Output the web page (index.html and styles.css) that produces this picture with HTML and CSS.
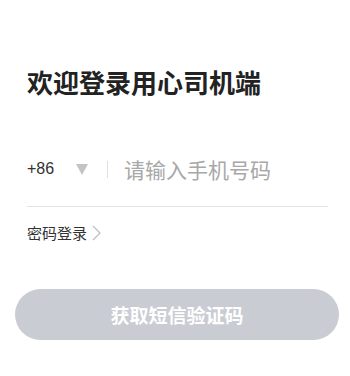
FILE: index.html
```html
<!DOCTYPE html>
<html lang="zh-CN">
<head>
    <meta charset="UTF-8">
    <meta name="viewport" content="width=device-width, initial-scale=1.0">
    <title>用心司机端</title>
    <link rel="stylesheet" href="styles.css">
</head>
<body>
    <div class="page">
        <h1 class="title">欢迎登录用心司机端</h1>

        <div class="phone-row">
            <span class="code">+86</span>
            <span class="arrow"></span>
            <span class="sep"></span>
            <input type="tel" class="phone" placeholder="请输入手机号码">
        </div>

        <a class="pwd-link" href="#">密码登录
            <svg width="9" height="16" viewBox="0 0 9 16"><path d="M1 1 L8 8 L1 15" fill="none" stroke="#bdbdbd" stroke-width="1.2"/></svg>
        </a>

        <button class="btn" type="button">获取短信验证码</button>
    </div>
</body>
</html>
```

FILE: styles.css
```css
body {
    margin: 0;
    background-color: #fff;
    font-family: "Noto Sans CJK SC", "Noto Sans", sans-serif;
}

.page {
    padding: 63px 22px 0 27px;
}

.title {
    margin: 0;
    font-size: 26px;
    line-height: 38px;
    font-weight: bold;
    color: #222;
}

.phone-row {
    display: flex;
    align-items: center;
    height: 40px;
    padding-bottom: 17px;
    margin-top: 48px;
    border-bottom: 1px solid #e3e3e3;
}

.code {
    font-family: "Liberation Sans", sans-serif;
    font-size: 16px;
    color: #333;
    width: 49px;
}

.arrow {
    width: 0;
    height: 0;
    border-left: 6px solid transparent;
    border-right: 6px solid transparent;
    border-top: 11px solid #c4c4c4;
}

.sep {
    width: 1px;
    height: 17px;
    background-color: #e0e0e0;
    margin-left: 19px;
}

.phone {
    flex: 1;
    min-width: 0;
    margin-left: 16px;
    border: none;
    outline: none;
    padding: 0;
    font-family: inherit;
    font-size: 21px;
    color: #333;
    background: transparent;
}

.phone::placeholder {
    color: #a8a8a8;
}

.pwd-link {
    display: flex;
    align-items: center;
    gap: 5px;
    margin-top: 15px;
    font-size: 15px;
    color: #333;
    text-decoration: none;
}

.btn {
    display: block;
    width: 324px;
    height: 51px;
    margin: 46px 0 0 -12px;
    border: none;
    border-radius: 26px;
    background-color: #c9ccd3;
    color: #fff;
    font-family: inherit;
    font-size: 19px;
    font-weight: bold;
}
```
